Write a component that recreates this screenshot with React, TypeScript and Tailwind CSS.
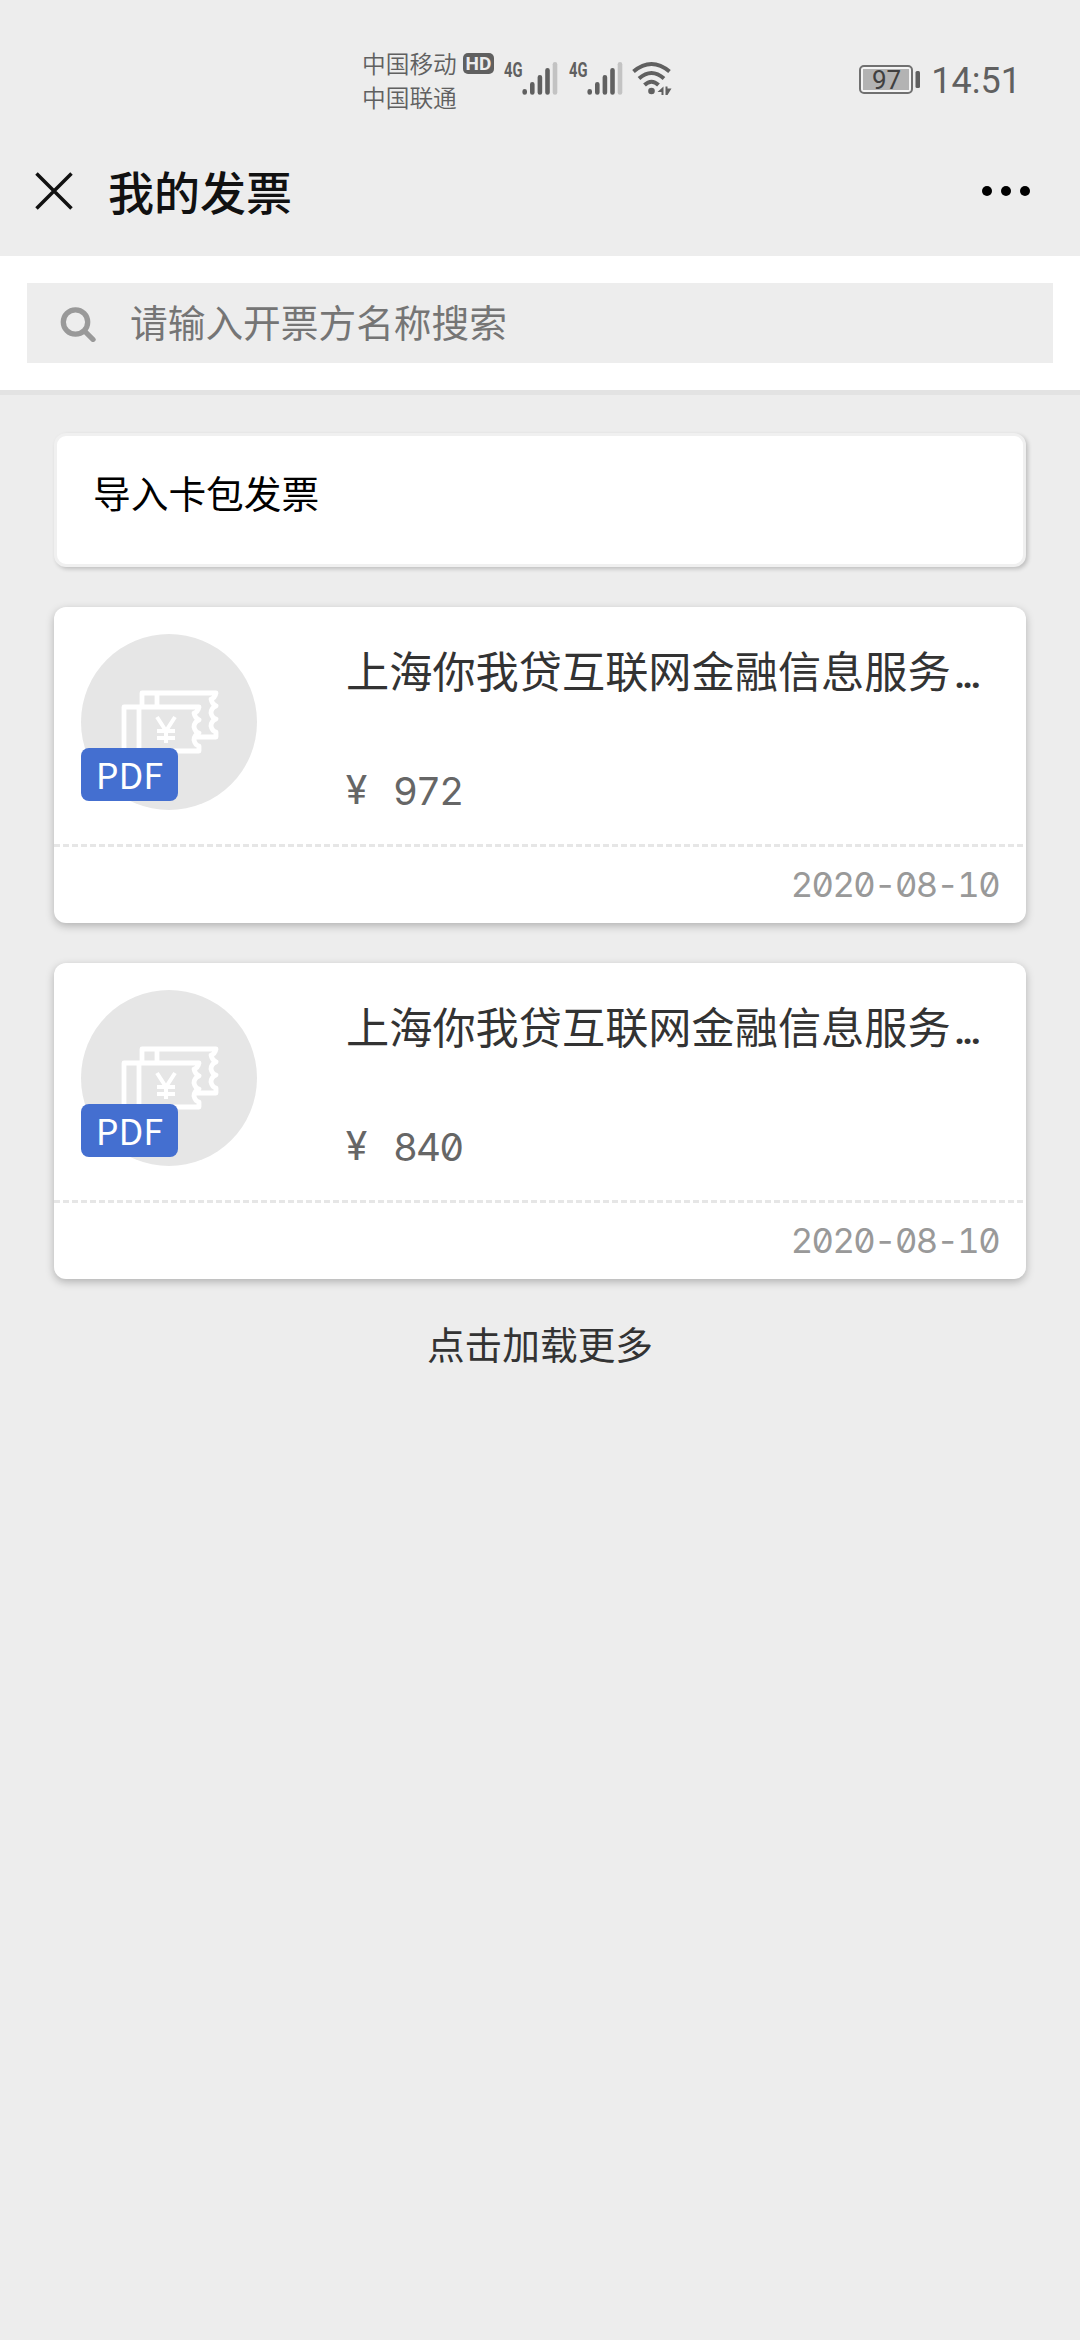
import clsx from 'clsx';

// 发票数据
const INVOICES = [
  { id: '1', title: '上海你我贷互联网金融信息服务', amount: 972, date: '2020-08-10' },
  { id: '2', title: '上海你我贷互联网金融信息服务', amount: 840, date: '2020-08-10' },
];

function Signal() {
  return (
    <svg className="w-[54px] h-[36px] shrink-0 overflow-visible" viewBox="0 0 54 36">
      <text x="0" y="17" fontSize="20" fontWeight="700" fill="#606060" fontFamily="Roboto, sans-serif" textLength="18.5" lengthAdjust="spacingAndGlyphs">4G</text>
      <g stroke="#606060" strokeWidth="4.6" strokeLinecap="round">
        <path d="M20.7 31.3v1.2M28.3 24.3v8.2M35.9 17.3v15.2M43.5 10.3v22.2" />
        <path d="M51 4.3v28.2" stroke="#c3c3c3" />
      </g>
    </svg>
  );
}

function Wifi() {
  return (
    <svg className="w-[40px] h-[36px] shrink-0" viewBox="0 0 40 36" fill="none" stroke="#606060" strokeWidth="4">
      <path d="M1.5 11.5Q19.5 -3.5 37.5 11.5M7 18.5Q19.5 7.5 32 18.5M12.5 25Q19.5 18.5 26.5 25" />
      <circle cx="19.5" cy="31" r="3.3" fill="#606060" stroke="none" />
      <path d="M31.5 26.5v8.5h-2v-3h-4zM33.5 26.5v8.500h2l4-6.500h-4v-2z" fill="#606060" stroke="none" />
    </svg>
  );
}

function StatusBar() {
  return (
    <div className="h-[129px] pt-[46px] pl-[362px] pr-[59px] flex text-[#606060]">
      <div className="text-[23.7px] leading-[34px] font-[350] w-[97px] whitespace-nowrap">
        <div>中国移动</div>
        <div>中国联通</div>
      </div>
      <div className="mt-[7px] ml-[4px] w-[31px] h-[21px] rounded-[5px] bg-[#606060] text-[#ededed] font-[Roboto] font-bold text-[19px] leading-[21px] text-center">HD</div>
      <div className="mt-[14px] ml-[10px] flex">
        <Signal />
        <div className="w-[11px]" />
        <Signal />
        <div className="w-[9px]" />
        <Wifi />
      </div>
      <div className="ml-auto mt-[14px] flex font-[Roboto]">
        <svg className="w-[62px] h-[40px] mt-[2px]" viewBox="0 0 62 40">
          <rect x="1" y="4" width="52" height="27" rx="4" fill="#f4f4f4" stroke="#707070" strokeWidth="2" />
          <rect x="4" y="7" width="46" height="21" fill="#b3b3b3" />
          <rect x="56.5" y="9" width="4.5" height="17" rx="1.5" fill="#606060" />
          <text x="27.5" y="27" fontSize="26" textAnchor="middle" fill="#404040" fontFamily="Roboto, sans-serif">97</text>
        </svg>
        <span className="ml-[10px] text-[36px] leading-[42px]">14:51</span>
      </div>
    </div>
  );
}

function InvoiceIcon() {
  return (
    <svg className="w-[176px] h-[176px]" viewBox="0 0 176 176" fill="none" stroke="#fff" strokeWidth="4.8" strokeLinejoin="round">
      <circle cx="88" cy="88" r="88" fill="#e6e6e6" stroke="none" />
      <path d="M61 73V59h74q-1 5-5 6q1 5 5 7q-5 2-5 7q1 5 5 6q-5 2-5 7q1 5 5 6v5h-21M76 59v14" />
      <path d="M43 116V73h75q-1 5-5 6q1 5 5 7q-5 2-5 7q1 5 5 6q-5 2-5 7q1 5 5 6v5H43M58 73v44" />
      <path d="M76 83l9 14l9-14M85 97v12M76 97h18M76 104h18" strokeWidth="4" />
    </svg>
  );
}

function InvoiceCard({ invoice, className }: { invoice: (typeof INVOICES)[number]; className?: string }) {
  return (
    <div className={clsx('h-[316px] bg-white rounded-[12px] shadow-[0_3px_9px_rgba(0,0,0,0.25)]', className)}>
      <div className="h-[237px] pl-[27px] pt-[27px] flex">
        <div className="relative w-[176px] h-[176px]">
          <InvoiceIcon />
          <span className="absolute left-0 top-[114px] w-[97px] h-[53px] rounded-[8px] bg-[#446fd0] text-white text-[36px] leading-[50px] text-center">PDF</span>
        </div>
        <div className="ml-[89px] w-[650px]">
          <div className="mt-[3px] text-[43.2px] leading-[64px] text-[#333] whitespace-nowrap">
            {invoice.title}
            <span className="ml-[3px] font-[Roboto] font-medium tracking-[-3.8px]">...</span>
          </div>
          <div className="mt-[62px] text-[38.5px] leading-[46px] text-[#666] flex">
            <span className="w-[47px] font-[Roboto] text-[40px]">¥</span>
            <span className="font-[Inter] [font-feature-settings:'zero','tnum'] tracking-[-1.9px]">{invoice.amount}</span>
          </div>
        </div>
      </div>
      <div className="h-[3px] bg-[repeating-linear-gradient(90deg,#e6e6e6_0_6px,#fff_6px_9px)]" />
      <div className="h-[76px] pr-[27px] text-right text-[34.6px] leading-[75px] text-[#999] font-[Inter] [font-feature-settings:'zero','tnum'] tracking-[-1.6px]">
        {invoice.date}
      </div>
    </div>
  );
}

export default function App() {
  return (
    <main className="w-[1080px] h-[2340px] bg-[#ededed] font-['Noto_Sans_CJK_SC',sans-serif] overflow-hidden">
      <StatusBar />

      {/* 标题栏 */}
      <div className="h-[127px] pl-[35px] pr-[49px] flex">
        <svg className="w-[38px] h-[38px] mt-[43px]" viewBox="0 0 38 38" stroke="#111" strokeWidth="3.5">
          <path d="M1.5 1.5l35 35M36.5 1.5l-35 35" />
        </svg>
        <h1 className="ml-[35px] mt-[28px] text-[46px] leading-[66px] font-medium text-[#111]">我的发票</h1>
        <svg className="w-[50px] h-[12px] ml-auto mt-[56px]" viewBox="0 0 50 12">
          <circle cx="6" cy="6" r="5" />
          <circle cx="25" cy="6" r="5" />
          <circle cx="44" cy="6" r="5" />
        </svg>
      </div>

      {/* 搜索 */}
      <div className="h-[139px] px-[27px] pt-[27px] bg-white border-b-[5px] border-b-[#e3e3e3]">
        <div className="h-[80px] bg-[#ededed] flex items-center pl-[33px]">
          <svg className="w-[38px] h-[38px]" viewBox="0 0 38 38" fill="none" stroke="#999" strokeWidth="5.3">
            <circle cx="15.5" cy="18" r="12.2" />
            <path d="M24.5 27l8.5 8.5" strokeLinecap="round" />
          </svg>
          <span className="ml-[32px] -mt-[5px] text-[37.7px] leading-[56px] text-[#757575]">请输入开票方名称搜索</span>
        </div>
      </div>

      <div className="px-[54px] pt-[38px]">
        <div className="h-[134px] pl-[36px] pt-[28px] bg-white rounded-[12px] border-[3px] border-[#f0f0f0] shadow-[2px_2px_4px_rgba(0,0,0,0.2)] text-[37.7px] leading-[56px] text-black">
          导入卡包发票
        </div>
        {INVOICES.map(invoice => (
          <InvoiceCard key={invoice.id} invoice={invoice} className="mt-[40px]" />
        ))}
        <div className="mt-[36px] text-center text-[37.7px] leading-[56px] text-[#333]">点击加载更多</div>
      </div>
    </main>
  );
}
